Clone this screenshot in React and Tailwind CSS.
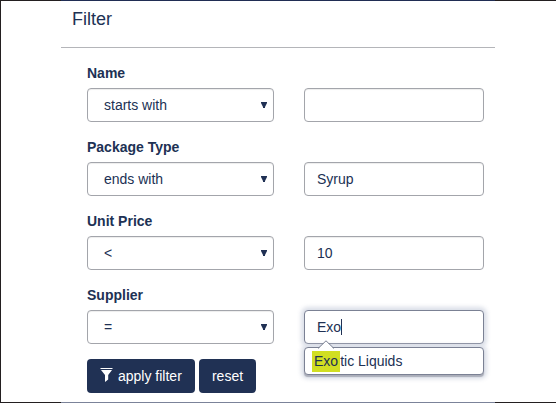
import React from "react";

const navy = "#203154";

function SelectBox({ value }) {
  return (
    <div className="flex h-[34px] w-[187px] items-center justify-between rounded-[4px] border border-[#a3a5ab] bg-white pr-[6px] pl-4 shadow-[inset_0_1px_1px_rgba(0,0,0,0.075)]">
      <span>{value}</span>
      <svg width="6" height="6" viewBox="0 0 6 6" fill={navy}>
        <path d="M0 0H6V1L4 5V6H2V5L0 1Z" />
      </svg>
    </div>
  );
}

function TextBox({ value, focused, children }) {
  const look = focused
    ? "border-[#7b8194] shadow-[0_0_4px_3px_rgba(215,219,229,0.9)]"
    : "border-[#a3a5ab] shadow-[inset_0_1px_1px_rgba(0,0,0,0.075)]";
  return (
    <div className={`relative flex h-[34px] w-[180px] items-center rounded-[4px] border bg-white px-3 ${look}`}>
      <span>{value}</span>
      {focused && <span className="h-4 w-px bg-[#203154]" />}
      {children}
    </div>
  );
}

function Suggestions() {
  return (
    <div className="absolute top-[36px] -left-px flex h-[28px] w-[180px] items-center rounded-[4px] border border-[#7b8194] bg-white pl-[7px] shadow-[0_2px_1px_rgba(150,153,165,0.7),0_1px_4px_3px_rgba(215,219,229,0.9)]">
      <svg className="absolute -top-[8px] left-[12px]" width="18" height="9" viewBox="0 0 18 9">
        <path d="M1 9L9 1L17 9Z" fill="white" />
        <path d="M1 8.5L9 0.8L17 8.5" fill="none" stroke="#7b8194" />
      </svg>
      <span className="relative flex h-[21px] items-center bg-[#d1de22] pl-[2px] pr-[2px]">Exo</span>
      <span className="relative">tic Liquids</span>
    </div>
  );
}

function FilterRow({ label, operator, value, focused, children }) {
  return (
    <div className="mb-[15px]">
      <div className="mb-[5px] h-5 font-bold">{label}</div>
      <div className="flex gap-[30px]">
        <SelectBox value={operator} />
        <TextBox value={value} focused={focused}>{children}</TextBox>
      </div>
    </div>
  );
}

export default function App() {
  return (
    <div className="flex h-[403px] w-[556px] flex-col overflow-hidden border-l border-[#231f20] bg-white font-['Liberation_Sans',Arial,sans-serif] text-[14px] leading-5 text-[#203154]">
      <div className="flex h-px shrink-0 bg-[#231f20]">
        <div className="ml-[60px] w-[434px] bg-[#202d54]" />
      </div>
      <div className="ml-[60px] flex h-[401px] w-[434px] shrink-0 flex-col">
        <div className="h-[47px] shrink-0 border-b border-[#b4b5b9] pt-2 pl-[11px] text-[18px]">Filter</div>
        <div className="pt-[15px] pl-[26px]">
          <FilterRow label="Name" operator="starts with" value="" />
          <FilterRow label="Package Type" operator="ends with" value="Syrup" />
          <FilterRow label="Unit Price" operator="<" value="10" />
          <FilterRow label="Supplier" operator="=" value="Exo" focused>
            <Suggestions />
          </FilterRow>
          <div className="flex gap-1 text-white">
            <button className="flex h-[34px] w-[108px] items-center rounded-[4px] bg-[#203154] pl-[13px]">
              <svg className="-mt-[2px]" width="13" height="14" viewBox="0 0 13 14" fill="white">
                <path d="M0.5 0H12.5V1H0.5ZM1 2H12L8.2 7V11.5L5 14V7Z" />
              </svg>
              <span className="ml-[5px]">apply filter</span>
            </button>
            <button className="h-[34px] w-[57px] rounded-[4px] bg-[#203154]">reset</button>
          </div>
        </div>
      </div>
      <div className="flex h-px shrink-0 bg-[#231f20]">
        <div className="ml-[60px] w-[434px] bg-[#7b8399]" />
      </div>
    </div>
  );
}
